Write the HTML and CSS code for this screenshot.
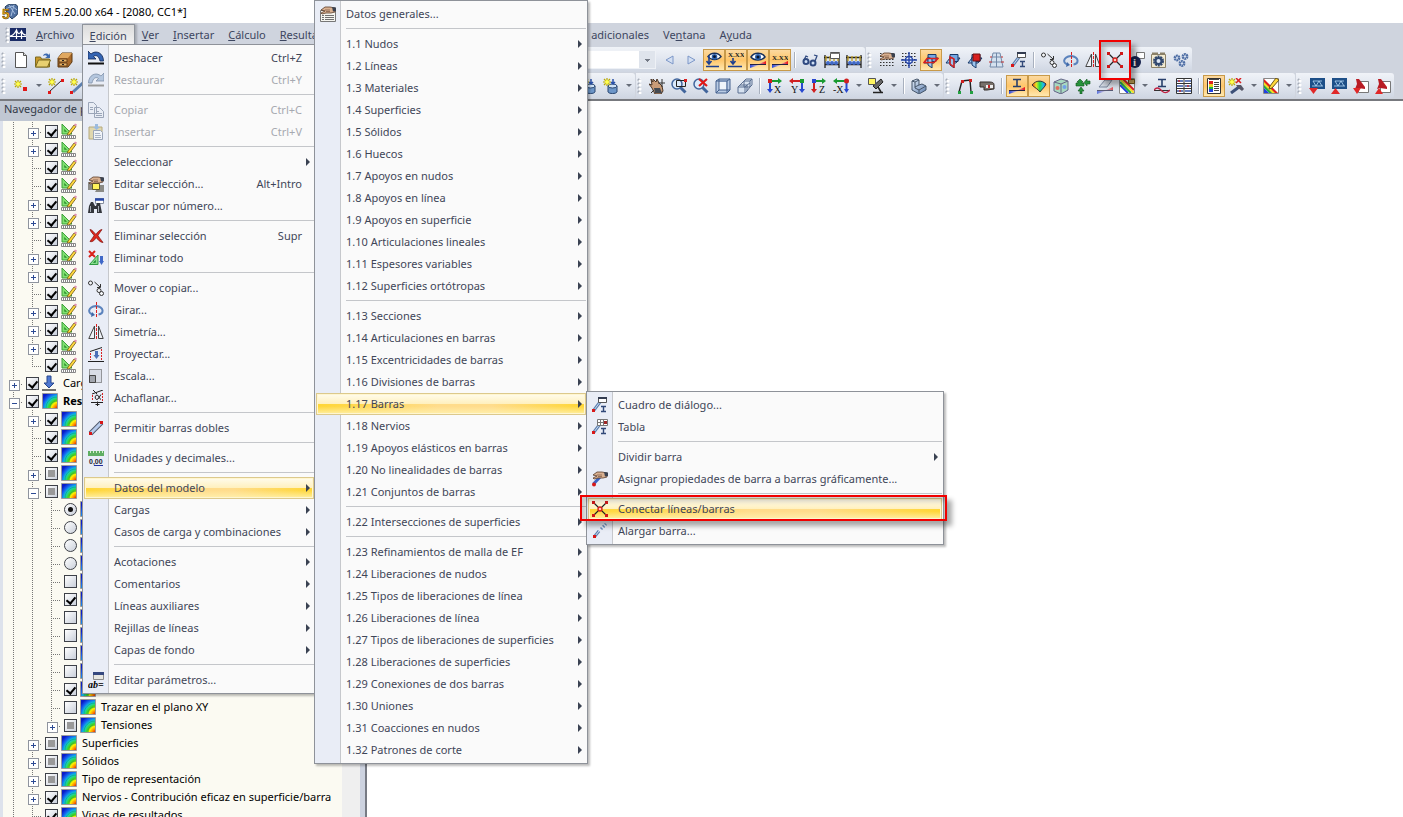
FILE: index.html
```html
<!DOCTYPE html>
<html lang="es">
<head>
<meta charset="utf-8">
<title>RFEM 5.20.00 x64 - [2080, CC1*]</title>
<link rel="stylesheet" href="styles.css">
</head>
<body>
<svg class="sprite" aria-hidden="true">
<defs>
<radialGradient id="g-rain" gradientUnits="userSpaceOnUse" cx="17" cy="17" r="20"><stop offset=".12" stop-color="#e8100a"/><stop offset=".26" stop-color="#ff8a00"/><stop offset=".4" stop-color="#fff000"/><stop offset=".52" stop-color="#3fd820"/><stop offset=".68" stop-color="#10d0d8"/><stop offset=".84" stop-color="#1560f0"/><stop offset="1" stop-color="#0a1cc8"/></radialGradient>
<linearGradient id="g-steel" x2="1" y2="1"><stop offset="0" stop-color="#e4eefa"/><stop offset="1" stop-color="#5f7fae"/></linearGradient>
<linearGradient id="g-wedge"><stop offset="0" stop-color="#2848d8"/><stop offset=".5" stop-color="#c8b8d8"/><stop offset="1" stop-color="#f01010"/></linearGradient>
<linearGradient id="g-fan"><stop offset="0" stop-color="#f02810"/><stop offset=".3" stop-color="#e8e820"/><stop offset=".55" stop-color="#20d850"/><stop offset=".8" stop-color="#20c0e0"/><stop offset="1" stop-color="#2050f0"/></linearGradient>
</defs>
<symbol id="rain" viewBox="0 0 16 16"><path fill="url(#g-rain)" stroke="#9a9a9a" d="M.5.5h15v15H.5z"/><path d="M4 15C4 9 9 4 15 4M8 15c0-4 3-7 7-7" fill="none" stroke="#0a8a50" stroke-opacity=".5"/></symbol>
<symbol id="draft" viewBox="0 0 16 16"><path d="M1 1l10 10H1z" fill="#7fe070" stroke="#3fa03a"/><path d="M3.500 6.500v2h2z" fill="#fff" stroke="#3fa03a"/><path d="M7 10l6-8 2 1.500-6 8-3 1z" fill="#ffd83a" stroke="#6b5418" stroke-width=".8"/><path d="M13 2l1-1.500 2 1-1 2z" fill="#e090b0"/><path d="M.5 12.500h14v3H.5z" fill="#fff" stroke="#888"/><path d="M2.500 13v2m2-2v2m2-2v2m2-2v2m2-2v2m2-2v2" stroke="#888"/></symbol>
<symbol id="load" viewBox="0 0 16 16"><path d="M5 1h4v7h3l-5 5-5-5h3z" fill="#4f78d0" stroke="#26468c"/><path d="M0 15h14" stroke="#444" stroke-width="1.500"/></symbol>
<symbol id="undo" viewBox="0 0 16 16"><path d="M0 1v8h8L5.500 6.500C8 4.500 11 6 12 11h3.500C15.500 3 8-.5 3 4z" fill="#3565b4" stroke="#142a55" stroke-width=".8"/><path d="M0 13.500h16" stroke="#111" stroke-width="2"/></symbol>
<symbol id="redo" viewBox="0 0 16 16"><path d="M16 1v8H8l2.500-2.500C8 4.500 5 6 4 11H.5C.5 3 8-.5 13 4z" fill="#b4c6de" stroke="#7f90a8" stroke-width=".8"/><path d="M0 13.500h16" stroke="#999" stroke-width="2"/></symbol>
<symbol id="copy" viewBox="0 0 16 16"><g fill="#e9edf5" stroke="#9aa5b8"><path d="M.5.500h5l3 3v8h-8zM6.500 5.500h5l4 4v6h-9z"/><path d="M8 9.500h3m-3 2h6m-6 2h6M2 5.500h3m-3 2h3"/></g></symbol>
<symbol id="paste" viewBox="0 0 16 16"><path d="M1 3h13v12H1z" fill="#e0d7ae" stroke="#b6aa7c"/><path d="M7 0h3v3h2L8.500 6 5 3h2z" fill="#9bbbe0"/><path d="M5.500 6.500h7l2 2v7h-9z" fill="#f0f3f8" stroke="#9aa5b8"/><path d="M7 9.500h5m-5 2h6m-6 2h6" stroke="#a9b4c6"/></symbol>
<symbol id="hand" viewBox="0 0 16 16"><path d="M1 4l4-3h5l5 1v4l-4 1H6l-4 1-1-1 4-2z" fill="#d9b090" stroke="#5a3c2a" stroke-width=".8"/><path d="M5 4h5M6 5.500h4" stroke="#7a5844" stroke-width=".7"/><path d="M12 1l4 .5V5l-3 .500z" fill="#39414f"/></symbol>
<symbol id="edit" viewBox="0 0 16 16"><path d="M0 6h6v8H0zm11 3h5v7h-9z" fill="#8b8b86"/><path d="M4.500 7.500h7v6h-7z" fill="#fff25a" stroke="#5f5a28"/><use href="#hand" width="16" height="16"/></symbol>
<symbol id="find" viewBox="0 0 16 16"><path d="M7.500.500h8v5h-8z" fill="#fff" stroke="#8890a0"/><path d="M7 1.500h9" stroke="#2848a8" stroke-width="2.500"/><path d="M3 4h2l2 4h1l1-3h3l2 10H9v-4H6v4H0l1-7z" fill="#33363c"/><path d="M2.500 8v6m8-6v6" stroke="#a8adb5"/></symbol>
<symbol id="del" viewBox="0 0 16 16"><path d="M2 1.500c2 0 4 3 6 5 1-2 4-5 6-5-2 3-3 4-4 6 1 2 3 4 5 7-3 0-5-3-7-5-1 2-3 5-6 4 2-3 3-4 4-6-1-2-3-3-4-6z" fill="#e0281c" stroke="#7a0d0a" stroke-width=".7"/></symbol>
<symbol id="delall" viewBox="0 0 16 16"><path d="M1.500 14.500L10 5v9.500z" fill="#86dc8c" stroke="#2f9a42"/><path d="M5.500 12.500h2v-2z" fill="#e9edf6" stroke="#2f9a42"/><path d="M1 1l6 6m0-6L1 7" stroke="#d8221a" stroke-width="2"/><path d="M12 6h3v5h1l-2.500 4-2.500-4h1z" fill="#3f68c8"/></symbol>
<symbol id="move" viewBox="0 0 16 16"><g fill="#f6f8fb" stroke="#333"><circle cx="2.500" cy="3" r="2"/><circle cx="11" cy="10.500" r="2"/><circle cx="13.500" cy="13.500" r="2"/><path d="M6.500 2l5.500 5m.500-3v3.500H9" fill="none"/></g></symbol>
<symbol id="rot" viewBox="0 0 16 16"><path d="M5 12.500C-.5 11.500-.5 5 8 4c8.500 1 8 7.500 2.500 8.500" fill="none" stroke="#5b83bd" stroke-width="2"/><path d="M3 15l4-2-3-3z" fill="#3f68a8"/><path d="M8.500 0v16" stroke="#d82020" stroke-dasharray="3 1"/></symbol>
<symbol id="mirror" viewBox="0 0 16 16"><path d="M6.500 2v12.500H.8zM10.500 2v12.500h4.700z" fill="#eef1f6" stroke="#444"/><path d="M8.500 0v16" stroke="#d82020" stroke-dasharray="3 1"/></symbol>
<symbol id="proj" viewBox="0 0 16 16"><path d="M0 15.500h16M2 5.500l12-4" stroke="#222"/><path d="M2.500 7v7m11-11v11" stroke="#d82020" stroke-dasharray="2 1"/><path d="M7 5h3v4h1.500L8.500 13 5.500 9H7z" fill="#4b70b8"/></symbol>
<symbol id="scale" viewBox="0 0 16 16"><path d="M1.500 1.500h12v13h-12z" fill="#d9dde6" stroke="#444" stroke-dasharray="1 1"/><path d="M1.500 7.500h6v7h-6z" fill="#a2a6ae" stroke="#444"/></symbol>
<symbol id="chamfer" viewBox="0 0 16 16"><path d="M4 4l11-4M5 0l4 4M3 12.500h12m-5.500-1V16m-2-1.500h4" stroke="#222" fill="none"/><path d="M4.500 5v6m10-8v8" stroke="#d82020" stroke-dasharray="2 1"/><path d="M13 4.500L10 9c-3 2-4-3.500-1-4 2 0 2 4 4 4.500" fill="none" stroke="#222"/></symbol>
<symbol id="bar2" viewBox="0 0 16 16"><path d="M2.500 13.500l11-11" stroke="#50596b" stroke-width="5"/><path d="M2.500 13.500l11-11" stroke="#b7cbec" stroke-width="3"/><path d="M1 12h3v3H1zM12 1h3v3h-3z" fill="#d81818"/></symbol>
<symbol id="units" viewBox="0 0 16 16"><path d="M0 1h16v5H0z" fill="#5fae62"/><path d="M2.500 1v2m3-2v2m3-2v2m3-2v2m3-2v2" stroke="#d4f0cc"/><text x="1" y="14" class="t-bold">0,00</text><path d="M6 15.500h9" stroke="#2030a0"/></symbol>
<symbol id="param" viewBox="0 0 16 16"><path d="M5.500.500h10v7h-10z" fill="#e7e7e2" stroke="#8b8b8b"/><path d="M5 1.500h11" stroke="#35487f" stroke-width="3"/><text x="0" y="16" class="t-script">ab=</text></symbol>
<symbol id="general" viewBox="0 0 16 16"><path d="M.5 4.500h15v11H.5z" fill="#f5f5f0" stroke="#777"/><path d="M2 9.500h2m1 0h9M2 11.500h2m1 0h9M2 13.500h2m1 0h9" stroke="#707070"/><use href="#hand" width="16" height="16"/></symbol>
<symbol id="bardlg" viewBox="0 0 16 16"><path d="M2 13l6-8" stroke="#5b7fae" stroke-width="3"/><path d="M2 13l6-8" stroke="#cddcf0"/><path d="M6.500.500h8v5h-8z" fill="#fff" stroke="#555"/><path d="M6 1h9" stroke="#333c50" stroke-width="2"/><path d="M9 9.500h5M9 14.500h5M11.500 9v6" stroke="#304878" stroke-width="1.400"/><path d="M0 12h3v3H0z" fill="#d81818"/></symbol>
<symbol id="bartab" viewBox="0 0 16 16"><path d="M2 13l6-8" stroke="#5b7fae" stroke-width="3"/><path d="M2 13l6-8" stroke="#cddcf0"/><path d="M5.500.500h10v6h-10zM8.500 0v7m3-7v7M5 3.500h11" fill="#fff" stroke="#777"/><path d="M12 2h3v3h-3z" fill="#a02828"/><path d="M9 9.500h5M9 14.500h5M11.500 9v6" stroke="#304878" stroke-width="1.400"/><path d="M0 12h3v3H0z" fill="#d81818"/></symbol>
<symbol id="assign" viewBox="0 0 16 16"><path d="M1.500 13L8 6" stroke="#3d64c4" stroke-width="3"/><use href="#hand" width="16" height="16"/><circle cx="2" cy="13.500" r="2" fill="#d81818"/></symbol>
<symbol id="connect" viewBox="0 0 16 16"><path d="M1.500 1.500l13 13m0-13l-13 13" stroke="#222" stroke-width="1.200"/><path d="M0 0h3v3H0zM13 0h3v3h-3zM0 13h3v3H0zM13 13h3v3h-3z" fill="#d01818"/><circle cx="8" cy="8" r="2" fill="#ffc8b0" stroke="#d01818" stroke-width="1.300"/></symbol>
<symbol id="extend" viewBox="0 0 16 16"><path d="M3 13l4-5" stroke="#5b7fae" stroke-width="3"/><path d="M3 13l4-5" stroke="#d5e2f3"/><path d="M9 6l5-5" stroke="#6d90c0" stroke-width="3" stroke-dasharray="1.500 1.500"/><path d="M1 12h3v3H1z" fill="#d81818"/></symbol>
<symbol id="app" viewBox="0 0 16 16"><path d="M3 3c3-4 12-4 13 0v6c-1 3-4 4-6 6L6 11z" fill="#4f6fa0" stroke="#27405f"/><path d="M7 1l6 9M12 1l-3 11M4 5l6-3 5 4" stroke="#a8c0e0" fill="none"/><text x="0" y="15" class="t-five">5</text></symbol>
<symbol id="bridge" viewBox="0 0 16 14"><path d="M0 0h16v13H0z" fill="#1b2c66"/><path d="M0 8.500h16M6.500 2v9M11.500 3v8M0 8c3 0 5-3 6.500-6 1 4 3 5 5 1 1 3 3 4 4.500 4" stroke="#fff" stroke-width="1.200" fill="none"/></symbol>
<symbol id="new" viewBox="0 0 16 16"><path d="M2.500.500h8l3 3v12h-11z" fill="#fff" stroke="#555"/><path d="M10.500.500v3h3" fill="#ddd" stroke="#555"/></symbol>
<symbol id="open" viewBox="0 0 16 16"><path d="M.5 5h5l1 2h8v8H.5z" fill="#c9992c" stroke="#7c6a20"/><path d="M3.500 8h12l-3 7H.5z" fill="#e8d070" stroke="#7c6a20"/><path d="M8 4c1-3 4-3 6-1l1-2v5h-5l2-1.500c-1-1.500-2-1.500-4-.5z" fill="#3c6ab0"/></symbol>
<symbol id="box" viewBox="0 0 16 16"><path d="M1 6l4-5h10v9l-4 5H1z" fill="#a8692a" stroke="#5e3a10"/><path d="M1 6l4-5h10l-4 5z" fill="#e0a860"/><path d="M2 7h8v3H2zm0 4h8v3H2z" fill="#e8b468" stroke="#6b431a"/><path d="M5 8.500h2M5 12.500h2" stroke="#222"/></symbol>
<symbol id="star" viewBox="0 0 16 16"><path d="M4 0v8M0 4h8M1 1l6 6m0-6L1 7" stroke="#b9a800" stroke-width="1.200"/><circle cx="4" cy="4" r="2" fill="#ffff50"/></symbol>
<symbol id="node" viewBox="0 0 16 16"><use href="#star" x="1" y="2" width="16" height="16"/><path d="M10 9h4v4h-4z" fill="#e01818"/></symbol>
<symbol id="line" viewBox="0 0 16 16"><path d="M1 14L14 2" stroke="#222"/><use href="#star" width="16" height="16"/><path d="M0 13h3v3H0zM13 1h3v3h-3z" fill="#e01818"/></symbol>
<symbol id="barnew" viewBox="0 0 16 16"><path d="M3 14L15 3" stroke="#5b7fae" stroke-width="3"/><use href="#star" width="16" height="16"/><path d="M0 13h3v3H0z" fill="#e01818"/></symbol>
<symbol id="prev" viewBox="0 0 16 16"><path d="M11 4v8L4 8z" fill="#d3dff2" stroke="#7c97c8"/></symbol>
<symbol id="next" viewBox="0 0 16 16"><path d="M4 4v8l7-4z" fill="#d3dff2" stroke="#7c97c8"/></symbol>
<symbol id="eye" viewBox="0 0 16 16"><path d="M1 5c3-5 11-5 14 0-3 4-11 4-14 0z" fill="#fff" stroke="#17305c" stroke-width="1.500"/><circle cx="8" cy="5" r="3" fill="#2e64b0"/><circle cx="8" cy="5" r="1.500" fill="#07142c"/></symbol>
<symbol id="eyeload" viewBox="0 0 16 16"><use href="#eye" x="1" width="15" height="15"/><path d="M3 4v8m-2.500-3L3 12l2.500-3M0 14.500h13" stroke="#1d4090" fill="none" stroke-width="1.600"/></symbol>
<symbol id="xxload" viewBox="0 0 16 16"><text x="0" y="5" class="t-mark">X.XX</text><path d="M5 6v6m-2.500-3L5 12l2.500-3M0 14.500h14" stroke="#1d4090" fill="none" stroke-width="1.600"/></symbol>
<symbol id="wedge" viewBox="0 0 16 16"><path d="M0 12h9l7-3v3l-7 1-9 3z" fill="url(#g-wedge)"/><path d="M0 12.500h16" stroke="#224"/></symbol>
<symbol id="eyewedge" viewBox="0 0 16 16"><use href="#eye" width="16" height="16"/><use href="#wedge" width="16" height="16"/></symbol>
<symbol id="xxwedge" viewBox="0 0 16 16"><text x="0" y="8" class="t-mark">X.XX</text><use href="#wedge" width="16" height="16"/></symbol>
<symbol id="glasses" viewBox="0 0 16 16"><circle cx="4" cy="9.500" r="2.500" fill="#cfe0f5" stroke="#304a80" stroke-width="2"/><circle cx="11" cy="11" r="2.500" fill="#cfe0f5" stroke="#304a80" stroke-width="2"/><path d="M2 8l2-4 2 1M13 9l2-5-3-1" stroke="#304a80" stroke-width="1.300" fill="none"/></symbol>
<symbol id="frame" viewBox="0 0 16 16"><path d="M1 3v13m14-13v13M0 5.500h16M1 12.500h14" stroke="#222" stroke-width="1.300"/><path d="M2 4v5m4-5v5m4-5v5m4-5v5" stroke="#c0a020" stroke-width="1.300"/><circle cx="4" cy="11" r="2" fill="#3f68c8"/><circle cx="8" cy="11" r="2" fill="#3f68c8"/><circle cx="12" cy="11" r="2" fill="#3f68c8"/></symbol>
<symbol id="framedlg" viewBox="0 0 16 16"><use href="#frame" width="16" height="16"/><path d="M6.500.500h9v6h-9z" fill="#fff" stroke="#555"/><path d="M6 1.500h10" stroke="#777"/></symbol>
<symbol id="dots" viewBox="0 0 16 16"><path d="M1 1.500h15m-15 3h15m-15 3h15m-15 3h15m-15 3h15" stroke="#333" stroke-width="1.200" stroke-dasharray="1.500 1.500"/></symbol>
<symbol id="handdots" viewBox="0 0 16 16"><use href="#dots" width="16" height="16"/><use href="#hand" width="16" height="16"/></symbol>
<symbol id="snap" viewBox="0 0 16 16"><use href="#dots" width="16" height="16"/><circle cx="8" cy="8" r="3.500" fill="#e8f0fc" stroke="#2444a8" stroke-width="1.400"/><path d="M8 0v16M0 8h16" stroke="#2444a8" stroke-width="1.400"/></symbol>
<symbol id="plane" viewBox="0 0 16 16"><path d="M1 11l4-5h10l-4 5z" fill="#9cc6f0" stroke="#183868"/><path d="M5 2.500h8v7H5z" fill="#73a8e4" stroke="#183868"/><path d="M5 5l4 2v9l-4-3z" fill="#9cc6f0" stroke="#183868"/></symbol>
<symbol id="plane1" viewBox="0 0 16 16"><use href="#plane" width="16" height="16"/><path d="M1 10.500l3-4h11l-4 4z" fill="none" stroke="#d82020" stroke-width="1.400"/></symbol>
<symbol id="plane2" viewBox="0 0 16 16"><use href="#plane" width="16" height="16"/><path d="M5 5l4 2v8l-4-3z" fill="none" stroke="#d82020" stroke-width="1.400"/></symbol>
<symbol id="plane3" viewBox="0 0 16 16"><use href="#plane" width="16" height="16"/><path d="M6 2h7v7H6z" fill="#d82020" stroke="#701010"/></symbol>
<symbol id="persp" viewBox="0 0 16 16"><path d="M4 1h7l3 14H1zM7.500 1v14M3 5h9M2 10h11" fill="#d5e2f0" stroke="#7289a8"/><path d="M1 5h2m9 0h2M0 10h3m9 0h3" stroke="#c03030"/></symbol>
<symbol id="infodlg" viewBox="0 0 16 16"><path d="M7.500.500h8v6h-8z" fill="#fff" stroke="#777"/><circle cx="6" cy="10" r="6" fill="#182450"/><text x="4" y="14" class="t-info">i</text></symbol>
<symbol id="gearbox" viewBox="0 0 16 16"><path d="M.5 2.500h14v13H.5z" fill="#f2ead0" stroke="#8a8068"/><path d="M1 1.500h6m2 0h5" stroke="#8a8068" stroke-width="2"/><circle cx="7.500" cy="9" r="4" fill="#dde6f4" stroke="#31486f" stroke-width="3" stroke-dasharray="1.800 .7"/><circle cx="7.500" cy="9" r="3" fill="none" stroke="#31486f" stroke-width="2"/></symbol>
<symbol id="gears" viewBox="0 0 16 16"><g fill="#e3ebf7" stroke="#4d6da4" stroke-width="2.500" stroke-dasharray="1.600 .5"><circle cx="4" cy="6" r="2.200"/><circle cx="12" cy="4.500" r="2.200"/><circle cx="9" cy="11.500" r="2.200"/></g></symbol>
<symbol id="cyl" viewBox="0 0 16 16"><path d="M5 8v6c1 2 8 2 9 0V8z" fill="#6d96c8" stroke="#28456f"/><ellipse cx="9.500" cy="8" rx="4.500" ry="2" fill="#cfe2f7" stroke="#28456f"/><path d="M10 1v5M8 4l2 2 2-2" stroke="#2850a8" fill="none" stroke-width="1.500"/><use href="#star" width="16" height="16"/></symbol>
<symbol id="pan" viewBox="0 0 16 16"><path d="M2 1l2 3V1l3 3 1-3 2 4 3 3 1 5-2 3H6L3 10 0 6l3 1z" fill="#c99c78" stroke="#4a3526"/><path d="M5 10h6l2 5H6z" fill="#444a52"/><path d="M13 1v8M9 5h7M2 15L5 12" stroke="#333"/></symbol>
<symbol id="zoom" viewBox="0 0 16 16"><circle cx="6" cy="6" r="5" fill="#dceafa" stroke="#41659c" stroke-width="1.500"/><path d="M9.500 9.500l5 5" stroke="#41659c" stroke-width="3"/></symbol>
<symbol id="zoomw" viewBox="0 0 16 16"><use href="#zoom" width="16" height="16"/><path d="M5.500 2.500h9v6h-9z" fill="none" stroke="#222"/><path d="M13 1h3v3h-3z" fill="#d82020"/></symbol>
<symbol id="zoomx" viewBox="0 0 16 16"><use href="#zoom" width="16" height="16"/><path d="M6 1l8 7m0-7L6 8" stroke="#e01818" stroke-width="2.200"/></symbol>
<symbol id="cube" viewBox="0 0 16 16"><path d="M1 3l3-2h11v11l-3 3H1z" fill="#b9cbe4" stroke="#44618e"/><path d="M4 4h7v8H4z" fill="#f0f5fb"/><path d="M1 3h11v12M12 3l3-2M4 1v11h11M1 15l3-3" fill="none" stroke="#44618e"/></symbol>
<symbol id="cubes" viewBox="0 0 16 16"><path d="M7 3l2-2h6v6l-2 2H7zM1 9l2-2h7v6l-2 2H1z" fill="#d7e2f0" stroke="#5b6f90"/><path d="M1 9h7v6M8 9l2-2M7 3h6v6m0-6l2-2M1 9l6-6m3 4l3-2m-3 8l3-4" fill="none" stroke="#5b6f90"/></symbol>
<symbol id="ax-x" viewBox="0 0 16 16"><path d="M3 3h8" stroke="#189a30" stroke-width="2"/><path d="M11 0l4 3-4 3z" fill="#189a30"/><path d="M3 4v9" stroke="#2848d0" stroke-width="2"/><path d="M0 11h6l-3 4z" fill="#2848d0"/><path d="M1 1h4v4H1z" fill="#d02020"/><text x="7" y="15" class="t-axis">X</text></symbol>
<symbol id="ax-y" viewBox="0 0 16 16"><path d="M4 3h9" stroke="#d02020" stroke-width="2"/><path d="M4 0L0 3l4 3z" fill="#d02020"/><path d="M13 4v9" stroke="#2848d0" stroke-width="2"/><path d="M10 11h6l-3 4z" fill="#2848d0"/><path d="M11 1h4v4h-4z" fill="#189a30"/><text x="2" y="15" class="t-axis">Y</text></symbol>
<symbol id="ax-z" viewBox="0 0 16 16"><path d="M3 3h8" stroke="#189a30" stroke-width="2"/><path d="M11 0l4 3-4 3z" fill="#189a30"/><path d="M3 4v9" stroke="#d02020" stroke-width="2"/><path d="M0 11h6l-3 4z" fill="#d02020"/><path d="M1 1h4v4H1z" fill="#2848d0"/><text x="8" y="15" class="t-axis">Z</text></symbol>
<symbol id="ax-mx" viewBox="0 0 16 16"><path d="M4 3h8" stroke="#189a30" stroke-width="2"/><path d="M4 0L0 3l4 3z" fill="#189a30"/><path d="M13.500 4v9" stroke="#2848d0" stroke-width="2"/><path d="M11 11h5l-2.500 4z" fill="#2848d0"/><circle cx="13.500" cy="3" r="2.500" fill="#d02020"/><text x="0" y="15" class="t-axis">-X</text></symbol>
<symbol id="lamp" viewBox="0 0 16 16"><path d="M5 8l8-7 2 3-7 7z" fill="#666" stroke="#222"/><path d="M.5.500h7v6h-7z" fill="#fff560" stroke="#555"/><path d="M10 9l3 5M5 14.500h10" stroke="#222" stroke-width="1.500"/></symbol>
<symbol id="ell" viewBox="0 0 16 16"><path d="M1 3l5-2 2 1v5l3-1 4 2v4l-7 4-7-4z" fill="url(#g-steel)" stroke="#445468"/><path d="M1 3l3 1v6l4 2v3M4 4l4-2M8 12l7-4M4 9l4-2" stroke="#445468" fill="none"/></symbol>
<symbol id="portal" viewBox="0 0 16 16"><path d="M2 14L5 3l8-1 1 12" fill="none" stroke="#222" stroke-width="1.400"/><path d="M4 2h3v3H4zm8-1h3v3h-3z" fill="#d02020"/><path d="M1 13h3v3H1zm12 0h3v3h-3z" fill="#22a040"/></symbol>
<symbol id="cam" viewBox="0 0 16 16"><path d="M1 4h9c4 0 5 1 5 3v4l-7 1H5V9H1z" fill="#77706a" stroke="#332d28"/><path d="M7 7h7v3H7z" fill="#eee"/><path d="M9 7h2v3H9z" fill="#c02020"/></symbol>
<symbol id="ibeam" viewBox="0 0 16 16"><path d="M4 1.500h8M4 8.500h8M8 1v8" stroke="#28406c" stroke-width="1.600"/><use href="#wedge" width="16" height="16"/></symbol>
<symbol id="fan" viewBox="0 0 16 16"><path d="M1 7c4-5 10-5 14-1-1 3-4 5-6 8-2-3-5-4-8-7z" fill="url(#g-fan)" stroke="#333"/></symbol>
<symbol id="solid" viewBox="0 0 16 16"><path d="M1 4l7-3 7 2v9l-7 4-7-3z" fill="#a8d8c0" stroke="#668"/><path d="M1 4l7 2 7-3M8 6v10" stroke="#668" fill="none"/><circle cx="4.500" cy="10" r="2" fill="#e07060"/><circle cx="11.500" cy="9" r="2" fill="#70a0e8"/></symbol>
<symbol id="supp" viewBox="0 0 16 16"><path d="M5 1l3 3H7v1h2v3H1V5h2V4H2zM6 9l3 4H7v3H5v-3H3zM15 3v3h-3v2L9 4.500 12 1v2z" fill="#27943c" stroke="#10501c" stroke-width=".6"/></symbol>
<symbol id="surf" viewBox="0 0 16 16"><path d="M2 9l6-7h7l-5 7z" fill="#d6dce6" stroke="#7d8aa0"/><use href="#wedge" width="16" height="16" opacity=".7"/></symbol>
<symbol id="stripes" viewBox="0 0 16 16"><path d="M0 0h16v16H0z" fill="#fff"/><path d="M1 7l8 8" stroke="#2040e0" stroke-width="2"/><path d="M1 4l11 11" stroke="#20b040" stroke-width="2"/><path d="M1 1l14 14" stroke="#f0e020" stroke-width="2"/><path d="M4 1l11 11" stroke="#e02020" stroke-width="2"/><path d="M.5.500h15v15H.5z" fill="none" stroke="#888"/></symbol>
<symbol id="stripes1" viewBox="0 0 16 16"><use href="#stripes" width="16" height="16"/><path d="M9.500 1.500h6v4h-6z" fill="#c8a85a" stroke="#6b5418"/></symbol>
<symbol id="stripes2" viewBox="0 0 16 16"><path d="M.5.500h15v15H.5z" fill="#fff" stroke="#888"/><path d="M1 1l14 14H9L1 7z" fill="#e02020"/><path d="M1 4l11 11H9L1 7z" fill="#f0e020"/><path d="M1 7l8 8H6l-5-5z" fill="#20b040"/><path d="M1 10l5 5H1z" fill="#2040e0"/><path d="M7 8l6-8 3 2-7 8-3 1z" fill="#ffd83a" stroke="#6b5418"/></symbol>
<symbol id="isect" viewBox="0 0 16 16"><path d="M4 1.500h8M4 8.500h8M8 1v8" stroke="#28406c" stroke-width="1.600"/><path d="M0 12.500h16" stroke="#333"/><path d="M0 12c3-4 6-1 8 1s4 3 8-1" stroke="#c02040" fill="none" stroke-width="1.400"/></symbol>
<symbol id="table" viewBox="0 0 16 16"><path d="M.5.500h15v15H.5z" fill="#fff" stroke="#333"/><path d="M1 3h6m2 0h6M1 8h6m2 0h6M1 13h6m2 0h6" stroke="#3858a8" stroke-width="1.500"/><path d="M1 5.500h14M1 10.500h14M8 1v14" stroke="#333"/><path d="M3 2v2m9 3v2M4 12v2" stroke="#c03030" stroke-width="1.500"/></symbol>
<symbol id="panel" viewBox="0 0 16 16"><path d="M1.500.500h13v15h-13z" fill="#fff" stroke="#333"/><path d="M3 3h4v3H3z" fill="#e02020"/><path d="M3 6h4v3H3z" fill="#e8d020"/><path d="M3 9h4v2H3z" fill="#20b040"/><path d="M3 11h4v3H3z" fill="#2040e0"/><path d="M3 1.500h10M8 4.500h5m-5 2h5m-5 2h5m-5 2h5m-5 2h5" stroke="#444"/></symbol>
<symbol id="hammer" viewBox="0 0 16 16"><path d="M3 15l8-6" stroke="#3c5078" stroke-width="3"/><path d="M8 7l5 0 3 4-2 2-4-3z" fill="#556"/><use href="#star" width="16" height="16"/><path d="M8 0l5 5m0-5L8 5" stroke="#d82020" stroke-width="1.500"/></symbol>
<symbol id="dl" viewBox="0 0 16 16"><path d="M1 0h15v11H1z" fill="#1d4f88"/><path d="M4 3l3 5 3-5 3 5M4 3h9M3 8h11" stroke="#b8dcf8" stroke-width=".8" fill="none"/></symbol>
<symbol id="dl1" viewBox="0 0 16 16"><use href="#dl" width="16" height="16"/><path d="M0 10h9l-4.500 6z" fill="#e02828"/></symbol>
<symbol id="dl2" viewBox="0 0 16 16"><use href="#dl" width="16" height="16"/><path d="M0 16h9l-4.500-6z" fill="#e02828"/></symbol>
<symbol id="pdf" viewBox="0 0 16 16"><path d="M5.500 3.500h10v11h-10z" fill="#fff" stroke="#777"/><path d="M3 1h3l6 8v2l-7-1-3 1 2-5z" fill="#b81c24"/></symbol>
<symbol id="pdf1" viewBox="0 0 16 16"><use href="#pdf" width="16" height="16"/><path d="M0 10h8l-4 6z" fill="#e02828"/></symbol>
<symbol id="pdf2" viewBox="0 0 16 16"><use href="#pdf" width="16" height="16"/><path d="M0 16h8l-4-6z" fill="#e02828"/></symbol>
</svg>

<header class="titlebar"><svg class="ico"><use href="#app"/></svg><h1>RFEM 5.20.00 x64 - [2080, CC1*]</h1></header>

<nav class="menubar">
  <div class="menubar-main">
    <i class="grip"></i><svg class="logo"><use href="#bridge"/></svg>
    <button><u>A</u>rchivo</button><button class="open"><u>E</u>dición</button><button><u>V</u>er</button><button><u>I</u>nsertar</button><button><u>C</u>álculo</button><button><u>R</u>esultados</button>
    <span class="fill"></span><button>adicionales</button>
  </div>
  <button>Ve<u>n</u>tana</button><button>A<u>y</u>uda</button>
</nav>

<div class="toolbars">
  <div class="row">
    <div class="band band-file">
      <i class="grip"></i>
      <button class="tool"><svg class="ico"><use href="#new"/></svg></button><button class="tool"><svg class="ico"><use href="#open"/></svg></button><button class="tool"><svg class="ico"><use href="#box"/></svg></button>
      <span class="fill"></span>
      <select class="combo" aria-label="Caso de carga"><option></option></select>
      <button class="tool"><svg class="ico"><use href="#prev"/></svg></button><button class="tool"><svg class="ico"><use href="#next"/></svg></button>
      <button class="tool on"><svg class="ico"><use href="#eyeload"/></svg></button><button class="tool on"><svg class="ico"><use href="#xxload"/></svg></button><button class="tool on"><svg class="ico"><use href="#eyewedge"/></svg></button><button class="tool on"><svg class="ico"><use href="#xxwedge"/></svg></button>
      <i class="sep"></i>
      <button class="tool"><svg class="ico"><use href="#glasses"/></svg></button><button class="tool"><svg class="ico"><use href="#framedlg"/></svg></button><button class="tool"><svg class="ico"><use href="#frame"/></svg></button>
    </div>
    <div class="band">
      <i class="grip"></i>
      <button class="tool"><svg class="ico"><use href="#handdots"/></svg></button><button class="tool"><svg class="ico"><use href="#snap"/></svg></button><button class="tool on"><svg class="ico"><use href="#plane1"/></svg></button><button class="tool"><svg class="ico"><use href="#plane2"/></svg></button><button class="tool"><svg class="ico"><use href="#plane3"/></svg></button><button class="tool"><svg class="ico"><use href="#persp"/></svg></button><button class="tool"><svg class="ico"><use href="#bardlg"/></svg></button>
      <i class="sep"></i>
      <button class="tool"><svg class="ico"><use href="#move"/></svg></button><button class="tool"><svg class="ico"><use href="#rot"/></svg></button><button class="tool"><svg class="ico"><use href="#mirror"/></svg></button><button class="tool marked"><svg class="ico"><use href="#connect"/></svg></button><button class="tool"><svg class="ico"><use href="#infodlg"/></svg></button><button class="tool"><svg class="ico"><use href="#gearbox"/></svg></button><button class="tool"><svg class="ico"><use href="#gears"/></svg></button>
    </div>
  </div>
  <div class="row">
    <div class="band band-insert">
      <i class="grip"></i>
      <button class="tool"><svg class="ico"><use href="#node"/></svg></button><button class="drop"></button><button class="tool"><svg class="ico"><use href="#line"/></svg></button><button class="tool"><svg class="ico"><use href="#barnew"/></svg></button>
      <span class="fill"></span>
      <button class="tool"><svg class="ico"><use href="#cyl"/></svg></button><button class="tool"><svg class="ico"><use href="#cyl"/></svg></button><button class="drop"></button>
    </div>
    <div class="band">
      <i class="grip"></i>
      <button class="tool"><svg class="ico"><use href="#pan"/></svg></button><button class="tool"><svg class="ico"><use href="#zoomw"/></svg></button><button class="tool"><svg class="ico"><use href="#zoomx"/></svg></button><button class="tool"><svg class="ico"><use href="#cube"/></svg></button><button class="tool"><svg class="ico"><use href="#cubes"/></svg></button>
      <i class="sep"></i>
      <button class="tool"><svg class="ico"><use href="#ax-x"/></svg></button><button class="tool"><svg class="ico"><use href="#ax-y"/></svg></button><button class="tool"><svg class="ico"><use href="#ax-z"/></svg></button><button class="tool"><svg class="ico"><use href="#ax-mx"/></svg></button><button class="drop"></button>
      <button class="tool"><svg class="ico"><use href="#lamp"/></svg></button><button class="drop"></button><i class="sep"></i>
      <button class="tool"><svg class="ico"><use href="#ell"/></svg></button><button class="drop"></button>
    </div>
    <div class="band">
      <i class="grip"></i>
      <button class="tool"><svg class="ico"><use href="#portal"/></svg></button><button class="tool"><svg class="ico"><use href="#cam"/></svg></button><i class="sep"></i>
      <button class="tool on"><svg class="ico"><use href="#ibeam"/></svg></button><button class="tool on"><svg class="ico"><use href="#fan"/></svg></button><button class="tool"><svg class="ico"><use href="#solid"/></svg></button><button class="tool"><svg class="ico"><use href="#supp"/></svg></button><button class="tool"><svg class="ico"><use href="#surf"/></svg></button><button class="tool"><svg class="ico"><use href="#stripes1"/></svg></button><button class="drop"></button>
      <button class="tool"><svg class="ico"><use href="#isect"/></svg></button><button class="tool"><svg class="ico"><use href="#table"/></svg></button><i class="sep"></i>
      <button class="tool on"><svg class="ico"><use href="#panel"/></svg></button><button class="tool"><svg class="ico"><use href="#hammer"/></svg></button><button class="drop"></button>
      <button class="tool"><svg class="ico"><use href="#stripes2"/></svg></button><button class="drop"></button>
    </div>
    <div class="band">
      <i class="grip"></i>
      <button class="tool"><svg class="ico"><use href="#dl1"/></svg></button><button class="tool"><svg class="ico"><use href="#dl2"/></svg></button><button class="tool"><svg class="ico"><use href="#pdf1"/></svg></button><button class="tool"><svg class="ico"><use href="#pdf2"/></svg></button>
    </div>
  </div>
</div>

<main class="work">
  <aside class="navigator">
    <h2>Navegador de proyectos</h2>
    <div class="tree-area">
    <div class="tree">
      <label class="node"><i class="v"></i><i class="t plus"></i><input type="checkbox" checked><svg class="ico"><use href="#draft"/></svg></label>
      <label class="node"><i class="v"></i><i class="t plus"></i><input type="checkbox" checked><svg class="ico"><use href="#draft"/></svg></label>
      <label class="node"><i class="v"></i><i class="t"></i><input type="checkbox" checked><svg class="ico"><use href="#draft"/></svg></label>
      <label class="node"><i class="v"></i><i class="t"></i><input type="checkbox" checked><svg class="ico"><use href="#draft"/></svg></label>
      <label class="node"><i class="v"></i><i class="t plus"></i><input type="checkbox" checked><svg class="ico"><use href="#draft"/></svg></label>
      <label class="node"><i class="v"></i><i class="t plus"></i><input type="checkbox" checked><svg class="ico"><use href="#draft"/></svg></label>
      <label class="node"><i class="v"></i><i class="t"></i><input type="checkbox" checked><svg class="ico"><use href="#draft"/></svg></label>
      <label class="node"><i class="v"></i><i class="t plus"></i><input type="checkbox" checked><svg class="ico"><use href="#draft"/></svg></label>
      <label class="node"><i class="v"></i><i class="t plus"></i><input type="checkbox" checked><svg class="ico"><use href="#draft"/></svg></label>
      <label class="node"><i class="v"></i><i class="t"></i><input type="checkbox" checked><svg class="ico"><use href="#draft"/></svg></label>
      <label class="node"><i class="v"></i><i class="t plus"></i><input type="checkbox" checked><svg class="ico"><use href="#draft"/></svg></label>
      <label class="node"><i class="v"></i><i class="t plus"></i><input type="checkbox" checked><svg class="ico"><use href="#draft"/></svg></label>
      <label class="node"><i class="v"></i><i class="t plus"></i><input type="checkbox" checked><svg class="ico"><use href="#draft"/></svg></label>
      <label class="node"><i class="v"></i><i class="t last"></i><input type="checkbox" checked><svg class="ico"><use href="#draft"/></svg></label>
      <label class="node"><i class="t plus"></i><input type="checkbox" checked><svg class="ico"><use href="#load"/></svg>Cargas</label>
      <label class="node"><i class="t minus"></i><input type="checkbox" checked><svg class="ico"><use href="#rain"/></svg><b>Resultados</b></label>
      <label class="node"><i class="v"></i><i class="t plus"></i><input type="checkbox" checked><svg class="ico"><use href="#rain"/></svg></label>
      <label class="node"><i class="v"></i><i class="t"></i><input type="checkbox" checked><svg class="ico"><use href="#rain"/></svg></label>
      <label class="node"><i class="v"></i><i class="t"></i><input type="checkbox" checked><svg class="ico"><use href="#rain"/></svg></label>
      <label class="node"><i class="v"></i><i class="t plus"></i><input type="checkbox" class="part"><svg class="ico"><use href="#rain"/></svg></label>
      <label class="node"><i class="v"></i><i class="t minus"></i><input type="checkbox" class="part"><svg class="ico"><use href="#rain"/></svg></label>
      <label class="node"><i class="v"></i><i class="v"></i><i class="t"></i><input type="radio" name="member" checked><svg class="ico"><use href="#rain"/></svg></label>
      <label class="node"><i class="v"></i><i class="v"></i><i class="t"></i><input type="radio" name="member"><svg class="ico"><use href="#rain"/></svg></label>
      <label class="node"><i class="v"></i><i class="v"></i><i class="t"></i><input type="radio" name="member"><svg class="ico"><use href="#rain"/></svg></label>
      <label class="node"><i class="v"></i><i class="v"></i><i class="t"></i><input type="radio" name="member"><svg class="ico"><use href="#rain"/></svg></label>
      <label class="node"><i class="v"></i><i class="v"></i><i class="t"></i><input type="checkbox"><svg class="ico"><use href="#rain"/></svg></label>
      <label class="node"><i class="v"></i><i class="v"></i><i class="t"></i><input type="checkbox" checked><svg class="ico"><use href="#rain"/></svg></label>
      <label class="node"><i class="v"></i><i class="v"></i><i class="t"></i><input type="checkbox"><svg class="ico"><use href="#rain"/></svg></label>
      <label class="node"><i class="v"></i><i class="v"></i><i class="t"></i><input type="checkbox"><svg class="ico"><use href="#rain"/></svg></label>
      <label class="node"><i class="v"></i><i class="v"></i><i class="t"></i><input type="checkbox"><svg class="ico"><use href="#rain"/></svg></label>
      <label class="node"><i class="v"></i><i class="v"></i><i class="t"></i><input type="checkbox"><svg class="ico"><use href="#rain"/></svg></label>
      <label class="node"><i class="v"></i><i class="v"></i><i class="t"></i><input type="checkbox" checked><svg class="ico"><use href="#rain"/></svg></label>
      <label class="node"><i class="v"></i><i class="v"></i><i class="t"></i><input type="checkbox"><svg class="ico"><use href="#rain"/></svg>Trazar en el plano XY</label>
      <label class="node"><i class="v"></i><i class="v"></i><i class="t last plus"></i><input type="checkbox" class="part"><svg class="ico"><use href="#rain"/></svg>Tensiones</label>
      <label class="node"><i class="v"></i><i class="t plus"></i><input type="checkbox" class="part"><svg class="ico"><use href="#rain"/></svg>Superficies</label>
      <label class="node"><i class="v"></i><i class="t plus"></i><input type="checkbox" class="part"><svg class="ico"><use href="#rain"/></svg>Sólidos</label>
      <label class="node"><i class="v"></i><i class="t plus"></i><input type="checkbox" class="part"><svg class="ico"><use href="#rain"/></svg>Tipo de representación</label>
      <label class="node"><i class="v"></i><i class="t plus"></i><input type="checkbox" checked><svg class="ico"><use href="#rain"/></svg>Nervios - Contribución eficaz en superficie/barra</label>
      <label class="node"><i class="v"></i><i class="t"></i><input type="checkbox" checked><svg class="ico"><use href="#rain"/></svg>Vigas de resultados</label>
    </div>
    <div class="scroll"></div>
    </div>
  </aside>
</main>

<ul class="menu menu-edit">
  <li><button><svg class="ico"><use href="#undo"/></svg>Deshacer<kbd>Ctrl+Z</kbd></button></li>
  <li><button disabled><svg class="ico"><use href="#redo"/></svg>Restaurar<kbd>Ctrl+Y</kbd></button></li>
  <li class="rule"></li>
  <li><button disabled><svg class="ico"><use href="#copy"/></svg>Copiar<kbd>Ctrl+C</kbd></button></li>
  <li><button disabled><svg class="ico"><use href="#paste"/></svg>Insertar<kbd>Ctrl+V</kbd></button></li>
  <li class="rule"></li>
  <li><button class="sub">Seleccionar</button></li>
  <li><button><svg class="ico"><use href="#edit"/></svg>Editar selección...<kbd>Alt+Intro</kbd></button></li>
  <li><button><svg class="ico"><use href="#find"/></svg>Buscar por número...</button></li>
  <li class="rule"></li>
  <li><button><svg class="ico"><use href="#del"/></svg>Eliminar selección<kbd>Supr</kbd></button></li>
  <li><button><svg class="ico"><use href="#delall"/></svg>Eliminar todo</button></li>
  <li class="rule"></li>
  <li><button><svg class="ico"><use href="#move"/></svg>Mover o copiar...</button></li>
  <li><button><svg class="ico"><use href="#rot"/></svg>Girar...</button></li>
  <li><button><svg class="ico"><use href="#mirror"/></svg>Simetría...</button></li>
  <li><button><svg class="ico"><use href="#proj"/></svg>Proyectar...</button></li>
  <li><button><svg class="ico"><use href="#scale"/></svg>Escala...</button></li>
  <li><button><svg class="ico"><use href="#chamfer"/></svg>Achaflanar...</button></li>
  <li class="rule"></li>
  <li><button><svg class="ico"><use href="#bar2"/></svg>Permitir barras dobles</button></li>
  <li class="rule"></li>
  <li><button><svg class="ico"><use href="#units"/></svg>Unidades y decimales...</button></li>
  <li class="rule"></li>
  <li><button class="sub hot">Datos del modelo</button></li>
  <li><button class="sub">Cargas</button></li>
  <li><button class="sub">Casos de carga y combinaciones</button></li>
  <li class="rule"></li>
  <li><button class="sub">Acotaciones</button></li>
  <li><button class="sub">Comentarios</button></li>
  <li><button class="sub">Líneas auxiliares</button></li>
  <li><button class="sub">Rejillas de líneas</button></li>
  <li><button class="sub">Capas de fondo</button></li>
  <li class="rule"></li>
  <li><button><svg class="ico"><use href="#param"/></svg>Editar parámetros...</button></li>
</ul>

<ul class="menu menu-model">
  <li><button><svg class="ico"><use href="#general"/></svg>Datos generales...</button></li>
  <li class="rule"></li>
  <li><button class="sub">1.1 Nudos</button></li>
  <li><button class="sub">1.2 Líneas</button></li>
  <li><button class="sub">1.3 Materiales</button></li>
  <li><button class="sub">1.4 Superficies</button></li>
  <li><button class="sub">1.5 Sólidos</button></li>
  <li><button class="sub">1.6 Huecos</button></li>
  <li><button class="sub">1.7 Apoyos en nudos</button></li>
  <li><button class="sub">1.8 Apoyos en línea</button></li>
  <li><button class="sub">1.9 Apoyos en superficie</button></li>
  <li><button class="sub">1.10 Articulaciones lineales</button></li>
  <li><button class="sub">1.11 Espesores variables</button></li>
  <li><button class="sub">1.12 Superficies ortótropas</button></li>
  <li class="rule"></li>
  <li><button class="sub">1.13 Secciones</button></li>
  <li><button class="sub">1.14 Articulaciones en barras</button></li>
  <li><button class="sub">1.15 Excentricidades de barras</button></li>
  <li><button class="sub">1.16 Divisiones de barras</button></li>
  <li><button class="sub hot">1.17 Barras</button></li>
  <li><button class="sub">1.18 Nervios</button></li>
  <li><button class="sub">1.19 Apoyos elásticos en barras</button></li>
  <li><button class="sub">1.20 No linealidades de barras</button></li>
  <li><button class="sub">1.21 Conjuntos de barras</button></li>
  <li class="rule"></li>
  <li><button class="sub">1.22 Intersecciones de superficies</button></li>
  <li class="rule"></li>
  <li><button class="sub">1.23 Refinamientos de malla de EF</button></li>
  <li><button class="sub">1.24 Liberaciones de nudos</button></li>
  <li><button class="sub">1.25 Tipos de liberaciones de línea</button></li>
  <li><button class="sub">1.26 Liberaciones de línea</button></li>
  <li><button class="sub">1.27 Tipos de liberaciones de superficies</button></li>
  <li><button class="sub">1.28 Liberaciones de superficies</button></li>
  <li><button class="sub">1.29 Conexiones de dos barras</button></li>
  <li><button class="sub">1.30 Uniones</button></li>
  <li><button class="sub">1.31 Coacciones en nudos</button></li>
  <li><button class="sub">1.32 Patrones de corte</button></li>
</ul>

<ul class="menu menu-bars">
  <li><button><svg class="ico"><use href="#bardlg"/></svg>Cuadro de diálogo...</button></li>
  <li><button><svg class="ico"><use href="#bartab"/></svg>Tabla</button></li>
  <li class="rule"></li>
  <li><button class="sub">Dividir barra</button></li>
  <li><button><svg class="ico"><use href="#assign"/></svg>Asignar propiedades de barra a barras gráficamente...</button></li>
  <li class="rule"></li>
  <li class="marked"><button class="hot"><svg class="ico"><use href="#connect"/></svg>Conectar líneas/barras</button></li>
  <li><button><svg class="ico"><use href="#extend"/></svg>Alargar barra...</button></li>
</ul>
</body>
</html>
```

FILE: styles.css
```css
* { box-sizing: border-box; }

body {
  margin: 0;
  height: 100vh;
  display: flex;
  flex-direction: column;
  overflow: hidden;
  background: #fff;
  color: #000;
  font: 11px/18px "Noto Sans", "Open Sans", sans-serif;
}

button { margin: 0; padding: 0; border: 0; background: none; color: inherit; font: inherit; white-space: nowrap; }

.sprite { position: absolute; width: 0; height: 0; }
.ico { width: 16px; height: 16px; flex: none; overflow: visible; }
.t-bold { font: bold 7px "Liberation Sans", sans-serif; fill: #223; }
.t-script { font: italic bold 10px "Liberation Serif", serif; }
.t-five { font: bold 14px "Liberation Sans", sans-serif; fill: #e8a818; stroke: #4a3608; stroke-width: 0.5px; }
.t-mark { font: bold 7px "Liberation Serif", serif; fill: #222; }
.t-axis { font: 10px "Liberation Serif", serif; fill: #111; }
.t-info { font: bold 11px "Liberation Serif", serif; fill: #fff; }

/* title and menu bar */
.titlebar { flex: none; display: flex; align-items: center; gap: 5px; height: 23px; padding-left: 2px; }
.titlebar h1 { margin: 0; font-size: 11px; font-weight: normal; }

.menubar { flex: none; display: flex; align-items: center; height: 24px; padding-left: 4px; background: #cfd4de; color: #3d4660; }
.menubar-main { display: flex; align-items: center; flex: 0 0 652px; height: 24px; }
.menubar button { height: 20px; padding: 0 7px; }
.menubar .open { position: relative; z-index: 1; height: 22px; border: 1px solid #8f949c; border-bottom: 0; background: linear-gradient(#dcdcdc, #f4f4f4); box-shadow: 2px 0 2px #0003; }
.logo { width: 18px; height: 14px; margin-right: 2px; }
.fill { flex: 1; }
.grip { flex: none; width: 10px; height: 16px; background: radial-gradient(circle at 3px 2px, #fff 1px, transparent 2px) 1px 1px / 10px 4px, radial-gradient(circle at 3px 2px, #a5acb8 1px, transparent 2px) 0 0 / 10px 4px; }
.menubar .grip { width: 5px; }

/* toolbars */
.toolbars { flex: none; display: flex; flex-direction: column; gap: 1px; padding-bottom: 1px; background: #cfd4de; border-bottom: 2px solid #77797e; }
.row { display: flex; gap: 1px; }
.band { flex: none; display: flex; align-items: center; height: 25px; border-radius: 0 3px 3px 0; background: linear-gradient(#f0f3f8, #e2e7f0 45%, #cfd6e2); }
.band-file { flex-basis: 865px; }
.band-insert { flex-basis: 635px; }
.tool { flex: none; display: flex; align-items: center; justify-content: center; width: 22px; height: 22px; position: relative; }
.tool.on { border: 1px solid #c89a4a; background: linear-gradient(#fbd9a0, #ffc669 50%, #ffe9b0); }
.drop { flex: none; width: 13px; height: 22px; display: flex; align-items: center; justify-content: center; }
.drop::before { content: ""; border: 3px solid transparent; border-top-color: #666c78; border-bottom: 0; }
.sep { flex: none; width: 8px; height: 16px; background: linear-gradient(90deg, transparent 3px, #a8b0be 3px 4px, #fff 4px 5px, transparent 5px); }
.combo { width: 120px; height: 19px; margin-right: 3px; border: 1px solid #eef1f6; border-radius: 0; appearance: none; background: linear-gradient(#747a86, #747a86) right 5px top 8px / 5px 1px no-repeat, linear-gradient(#747a86, #747a86) right 6px top 9px / 3px 1px no-repeat, linear-gradient(#747a86, #747a86) right 7px top 10px / 1px 1px no-repeat, linear-gradient(90deg, #fff calc(100% - 16px), #dfe4ec calc(100% - 16px)); }

.marked { position: relative; }
.marked::after { content: ""; position: absolute; z-index: 2; inset: -3px -5px -1px -8px; border: 2px solid #f00000; box-shadow: 5px 5px 5px #0005, inset 4px 4px 5px #0003; pointer-events: none; }
.tool.marked::after { inset: -9px -5px; }

/* navigator */
.work { flex: 1; min-height: 0; display: flex; }
.navigator { display: flex; flex-direction: column; width: 367px; border-right: 2px solid #777b84; background: #cdd3e0; padding: 0 5px 0 0; }
.navigator h2 { flex: none; margin: 0; height: 20px; padding-left: 4px; background: #c0c7d3; color: #333a48; font: 11px/16px "Noto Sans", "Open Sans", sans-serif; }
.tree-area { flex: 1; min-height: 0; display: flex; }
.tree { flex: 1; overflow: hidden; padding: 1px 0 0 1px; border-left: 3px solid #dde2ec; background: #fbfaf2; }
.scroll { width: 18px; background: #efefef; }
.node { display: flex; align-items: center; height: 18px; white-space: nowrap; }
.node .ico { margin-right: 5px; }
.node i { position: relative; flex: none; width: 19px; height: 18px; --dots-v: repeating-linear-gradient(#777 0 1px, transparent 1px 2px) 9px 0 / 1px; }
.node .v { background: var(--dots-v) 100% no-repeat; }
.node .t { background: var(--dots-v) 100% no-repeat, repeating-linear-gradient(90deg, #777 0 1px, transparent 1px 2px) 9px 10px / 10px 1px no-repeat; }
.node .t.last { background: var(--dots-v) 11px no-repeat, repeating-linear-gradient(90deg, #777 0 1px, transparent 1px 2px) 9px 10px / 10px 1px no-repeat; }
.plus::before, .minus::before { content: ""; position: absolute; left: 5px; top: 6px; width: 9px; height: 9px; border: 1px solid #8f949e; background: linear-gradient(#2c4a94, #2c4a94) center / 5px 1px no-repeat, linear-gradient(#2c4a94, #2c4a94) center / 1px 5px no-repeat, #fff; }
.minus::before { background: linear-gradient(#2c4a94, #2c4a94) center / 5px 1px no-repeat, #fff; }
.node input { appearance: none; flex: none; width: 13px; height: 13px; margin: 0 3px; border: 1px solid #3e4148; background: linear-gradient(135deg, #fff, #c9cfda); position: relative; }
.node input[type="checkbox"]:checked::after { content: ""; position: absolute; left: 3px; top: 1px; width: 4px; height: 7px; border: solid #000; border-width: 0 2px 2px 0; transform: rotate(40deg); }
.node .part::after { content: ""; position: absolute; inset: 2px; background: #999; }
.node input[type="radio"] { border-radius: 50%; }
.node input[type="radio"]:checked::after { content: ""; position: absolute; inset: 3px; border-radius: 50%; background: #111; }

/* menus */
.menu { position: absolute; z-index: 2; margin: 0; padding: 2px 1px; list-style: none; border: 1px solid #8e9299; background: linear-gradient(90deg, #e9edf6 25px, #c6c8cc 25px 26px, #fafafa 26px); box-shadow: 2px 2px 2px #0004; color: #3f4658; }
.menu-edit { left: 82px; top: 44px; width: 234px; }
.menu-model { left: 314px; top: 0; width: 274px; }
.menu-bars { left: 586px; top: 391px; width: 358px; }
.menu button { position: relative; display: flex; align-items: center; width: 100%; height: 22px; padding: 0 12px 0 30px; text-align: left; }
.menu .ico { position: absolute; left: 4px; top: 3px; }
.menu button:disabled { color: #a6a9b0; }
.menu kbd { margin-left: auto; font: inherit; }
.menu .rule { height: 8px; margin-left: 30px; background: linear-gradient(#c4c6ca, #c4c6ca) 0 3px / 100% 1px no-repeat; }
.sub::after { content: ""; position: absolute; right: 4px; top: 7px; border: 4px solid transparent; border-left-color: #3a4252; border-right: 0; }
.menu .hot { box-shadow: inset 0 0 0 1px #dcc98c, inset 0 0 0 2px #fff6d0; background: linear-gradient(#fffdf2, #fff0bd) 0 0 / 100% 50% no-repeat, linear-gradient(transparent 60%, #fff2b0), linear-gradient(90deg, #ffd633, #ffdc8c 45%, #ffdc8c 65%, #ffd633); }
```
